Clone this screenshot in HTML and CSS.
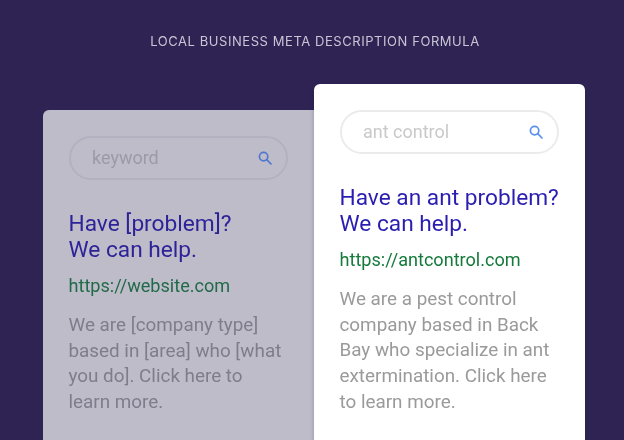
FILE: index.html
```html
<!DOCTYPE html>
<html lang="en">
<head>
<meta charset="utf-8">
<title>Local Business Meta Description Formula</title>
<link rel="stylesheet" href="styles.css">
</head>
<body>
<main class="page">
  <h1 class="title">LOCAL BUSINESS META DESCRIPTION FORMULA</h1>
  <div class="cards">
    <section class="card card-template">
      <div class="search">
        <span class="query">keyword</span>
        <svg class="icon" viewBox="0 0 14 14" width="14" height="14" aria-hidden="true"><circle cx="5.6" cy="5.6" r="4.2"/><path d="M8.7 8.7L13 13"/></svg>
      </div>
      <h2 class="headline">Have [problem]?<br>We can help.</h2>
      <p class="url">https://website.com</p>
      <p class="desc">We are [company type]<br>based in [area] who [what<br>you do]. Click here to<br>learn more.</p>
    </section>
    <section class="card card-example">
      <div class="search">
        <span class="query">ant control</span>
        <svg class="icon" viewBox="0 0 14 14" width="14" height="14" aria-hidden="true"><circle cx="5.6" cy="5.6" r="4.2"/><path d="M8.7 8.7L13 13"/></svg>
      </div>
      <h2 class="headline">Have an ant problem?<br>We can help.</h2>
      <p class="url">https://antcontrol.com</p>
      <p class="desc">We are a pest control<br>company based in Back<br>Bay who specialize in ant<br>extermination. Click here<br>to learn more.</p>
    </section>
  </div>
</main>
</body>
</html>
```

FILE: styles.css
```css
* { box-sizing: border-box; }
html, body { margin: 0; height: 100%; }
body { background: #2e2352; overflow: hidden; font-family: Roboto, "Liberation Sans", sans-serif; }
.page { width: 624px; height: 440px; overflow: hidden; padding-top: 33px; filter: blur(0.35px); }
.title {
  margin: 0;
  height: 16px;
  line-height: 16px;
  padding-left: 6px;
  text-align: center;
  font-family: Inter, "Liberation Sans", sans-serif;
  font-weight: 400;
  font-size: 13px;
  letter-spacing: 0.56px;
  color: #c9c5d6;
}
.cards { display: flex; align-items: flex-start; padding: 35px 0 0 43px; }
.card { width: 271px; height: 400px; padding: 26px 26px 0; flex: none; }
.card-template { background: #bfbcca; margin-top: 26px; border-radius: 6px 0 0 0; }
.card-example { background: #fff; border-radius: 6px 6px 0 0; box-shadow: -2px 0 3px rgba(46, 35, 82, 0.14); }
.search {
  width: 219px;
  height: 44px;
  border-radius: 22px;
  display: flex;
  align-items: center;
  justify-content: space-between;
  padding: 0 14.5px 2px 21px;
  border: 2px solid #ebebeb;
}
.card-template .search { border-color: #b3b0c0; }
.query { font-size: 18px; color: #c9c9c9; }
.card-template .query { color: #9c99a9; }
.icon { fill: none; stroke: #5b8fee; stroke-width: 1.7; stroke-linecap: round; margin-top: 2px; }
.card-template .icon { stroke: #5079ce; }
.headline { margin: 31px 0 0 -0.5px; font-size: 22.7px; line-height: 26px; font-weight: 400; color: #2a1eb0; }
.card-template .headline { color: #2d2398; }
.url { margin: 10px 0 0 -0.5px; font-size: 18.1px; line-height: 26px; color: #157a3c; }
.card-template .url { color: #216a48; }
.desc { margin: 14px 0 0 -0.5px; font-size: 18.85px; line-height: 25.7px; color: #9a9a9a; }
.card-template .desc { color: #7f7c8c; }
```
